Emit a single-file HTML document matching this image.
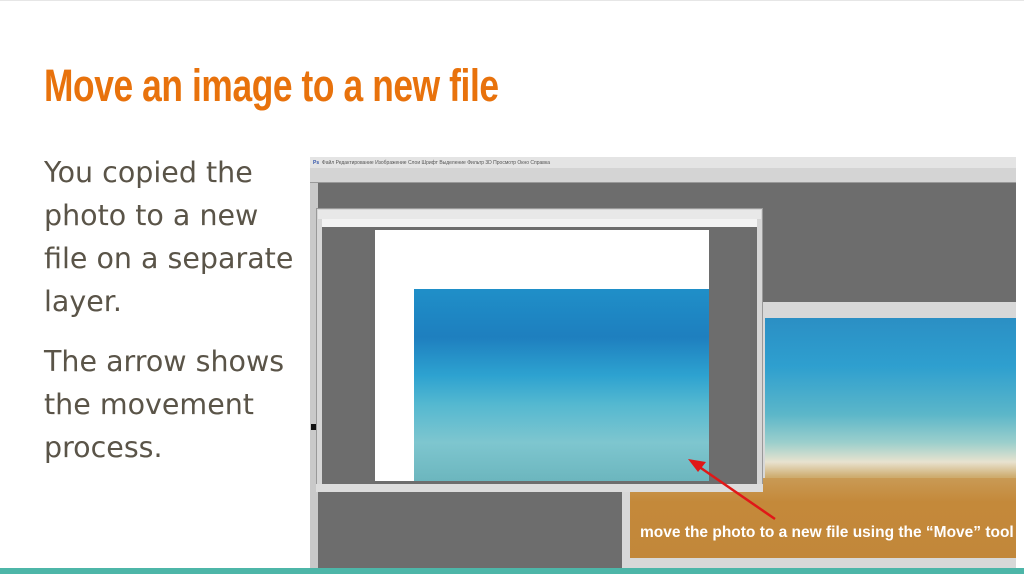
<!DOCTYPE html>
<html><head><meta charset="utf-8"><style>
*{margin:0;padding:0;box-sizing:border-box}
body{width:1024px;height:574px;background:#fff;position:relative;overflow:hidden;font-family:"Liberation Sans",sans-serif}
.a{position:absolute}
#title{left:44px;top:60px;font-weight:bold;font-size:45px;color:#e8720c;white-space:nowrap;letter-spacing:-0.5px;transform:scaleX(0.785);transform-origin:0 0}
.body{left:44px;color:#5a5448;font-family:"DejaVu Sans",sans-serif;font-size:28.5px;line-height:43px;width:290px;white-space:nowrap}
</style></head><body>
<div class="a" style="left:0;top:0;width:1024px;height:1px;background:#e6e6e6"></div>
<div class="a" id="title">Move an image to a new file</div>
<div class="a body" style="top:151px">You copied the<br>photo to a new<br>file on a separate<br>layer.</div>
<div class="a body" style="top:340px">The arrow shows<br>the movement<br>process.</div>

<div class="a" style="left:310px;top:157px;width:706px;height:411px;background:#6d6d6d"></div>
<div class="a" style="left:310px;top:157px;width:706px;height:11px;background:#e4e4e4;font-size:5px;color:#555;padding:3px 0 0 3px;white-space:nowrap"><b style="color:#35a">Ps</b>&nbsp; Файл Редактирование Изображение Слои Шрифт Выделение Фильтр 3D Просмотр Окно Справка</div>
<div class="a" style="left:310px;top:168px;width:706px;height:15px;background:#d4d4d4;border-bottom:1px solid #999"></div>
<div class="a" style="left:310px;top:183px;width:8px;height:385px;background:#c9c9c9"></div>
<div class="a" style="left:311px;top:424px;width:6px;height:6px;background:#111"></div>

<div class="a" style="left:622px;top:302px;width:394px;height:266px;background:#d8d8d8"></div>
<div class="a" style="left:765px;top:318px;width:251px;height:240px;background:linear-gradient(180deg,#2b8fc4 0%,#2e9fcf 20%,#5bb6c9 40%,#9ccfcc 52%,#e8e2cf 60%,#cfae72 66%,#c58e3c 72%,#c4893a 100%)"></div>
<div class="a" style="left:630px;top:478px;width:386px;height:80px;background:linear-gradient(180deg,#c99a55,#c4893a 30%,#c2873a)"></div>
<div class="a" style="left:640px;top:524px;font-size:15.5px;font-weight:bold;color:#fff;white-space:nowrap">move the photo to a new file using the “Move” tool</div>

<div class="a" style="left:316px;top:208px;width:447px;height:284px;background:#d6d6d6;border:1px solid #999"></div>
<div class="a" style="left:318px;top:210px;width:443px;height:9px;background:#e8e8e8"></div>
<div class="a" style="left:322px;top:219px;width:435px;height:8px;background:#f3f3f3"></div>
<div class="a" style="left:322px;top:227px;width:435px;height:257px;background:#6d6d6d"></div>
<div class="a" style="left:375px;top:230px;width:334px;height:251px;background:#fff"></div>
<div class="a" style="left:414px;top:289px;width:295px;height:192px;background:linear-gradient(180deg,#1f8fc8 0%,#1e7fbf 25%,#2da2d0 45%,#54b8d0 60%,#7ec6cf 80%,#6cb6be 100%)"></div>
<div class="a" style="left:316px;top:484px;width:447px;height:8px;background:#dcdcdc"></div>

<svg class="a" style="left:0;top:0" width="1024" height="574">
<line x1="775" y1="519" x2="698" y2="466" stroke="#e01818" stroke-width="2.5"/>
<polygon points="688,459 706,462 698,472" fill="#e01818"/>
</svg>

<div class="a" style="left:0;top:568px;width:1024px;height:6px;background:#4db6a8"></div>
</body></html>
